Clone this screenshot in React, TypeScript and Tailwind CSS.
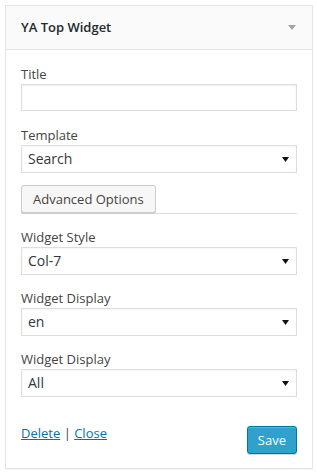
import React from "react";

const Caret = () => (
  <svg width="7" height="5" viewBox="0 0 7 5" className="shrink-0">
    <path d="M0 0h7L3.5 5z" fill="#111" />
  </svg>
);

const Field = ({ label, value, gap = "mt-[14px]" }: { label: string; value: string; gap?: string }) => (
  <div className={gap}>
    <div className="h-[18px] text-[13px] leading-[18px] text-[#444]">{label}</div>
    <div className="mt-px flex h-[28px] items-center justify-between border border-[#ddd] bg-white pl-[6px] pr-[7px] shadow-[inset_0_1px_2px_rgba(0,0,0,0.04)]">
      <span className="text-[14px] leading-none text-[#32373c]">{value}</span>
      <Caret />
    </div>
  </div>
);

const App = () => {
  return (
    <div className="min-h-[474px] bg-white pl-[5px] pt-[5px] font-['Open_Sans',sans-serif]">
      <div className="w-[308px] border border-[#e5e5e5] bg-white shadow-[0_1px_1px_rgba(0,0,0,0.04)]">
        {/* widget header */}
        <div className="flex h-[44px] items-center justify-between border-b border-[#e5e5e5] bg-[#fafafa] pl-[15px] pr-[16px]">
          <h4 className="text-[13px] font-semibold text-[#23282d]">YA Top Widget</h4>
          <svg width="8" height="5" viewBox="0 0 8 5">
            <path d="M0 0h8L4 5z" fill="#a0a5aa" />
          </svg>
        </div>

        {/* widget body */}
        <div className="px-[15px] pb-[14px] pt-[15px]">
          <div>
            <div className="h-[18px] text-[13px] leading-[18px] text-[#444]">Title</div>
            <div className="mt-px h-[27px] border border-[#ddd] bg-white shadow-[inset_0_1px_2px_rgba(0,0,0,0.07)]" />
          </div>
          <Field label="Template" value="Search" gap="mt-[15px]" />

          <div className="mt-[12px] border-b border-[#ddd]">
            <button className="h-[28px] rounded-[3px] border border-[#ccc] bg-[#f7f7f7] px-[11px] text-[13px] leading-none text-[#444] shadow-[0_1px_0_#ccc]">
              Advanced Options
            </button>
          </div>

          <Field label="Widget Style" value="Col-7" />
          <Field label="Widget Display" value="en" />
          <Field label="Widget Display" value="All" />

          <div className="mt-[27px] flex items-start justify-between">
            <div className="text-[13px] leading-[18px] text-[#444]">
              <a className="text-[#0073aa] underline" href="#">Delete</a>
              {" | "}
              <a className="text-[#0073aa] underline" href="#">Close</a>
            </div>
            <button className="mt-[2px] h-[28px] rounded-[3px] border border-[#0074a2] bg-[#2ea2cc] px-[10px] text-[13px] leading-none text-white shadow-[inset_0_1px_0_rgba(120,200,230,0.5),0_1px_0_rgba(0,0,0,0.15)]">
              Save
            </button>
          </div>
        </div>
      </div>
    </div>
  );
};

export default App;
